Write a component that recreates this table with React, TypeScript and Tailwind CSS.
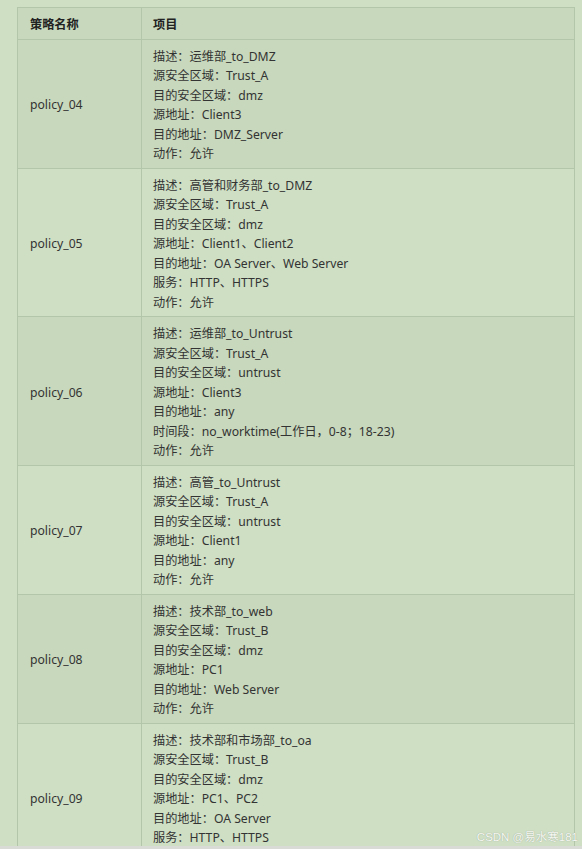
const rows = [
  {
    name: "policy_04",
    items: [
      "描述：运维部_to_DMZ",
      "源安全区域：Trust_A",
      "目的安全区域：dmz",
      "源地址：Client3",
      "目的地址：DMZ_Server",
      "动作：允许",
    ],
  },
  {
    name: "policy_05",
    items: [
      "描述：高管和财务部_to_DMZ",
      "源安全区域：Trust_A",
      "目的安全区域：dmz",
      "源地址：Client1、Client2",
      "目的地址：OA Server、Web Server",
      "服务：HTTP、HTTPS",
      "动作：允许",
    ],
  },
  {
    name: "policy_06",
    items: [
      "描述：运维部_to_Untrust",
      "源安全区域：Trust_A",
      "目的安全区域：untrust",
      "源地址：Client3",
      "目的地址：any",
      "时间段：no_worktime(工作日，0-8；18-23)",
      "动作：允许",
    ],
  },
  {
    name: "policy_07",
    items: [
      "描述：高管_to_Untrust",
      "源安全区域：Trust_A",
      "目的安全区域：untrust",
      "源地址：Client1",
      "目的地址：any",
      "动作：允许",
    ],
  },
  {
    name: "policy_08",
    items: [
      "描述：技术部_to_web",
      "源安全区域：Trust_B",
      "目的安全区域：dmz",
      "源地址：PC1",
      "目的地址：Web Server",
      "动作：允许",
    ],
  },
  {
    name: "policy_09",
    items: [
      "描述：技术部和市场部_to_oa",
      "源安全区域：Trust_B",
      "目的安全区域：dmz",
      "源地址：PC1、PC2",
      "目的地址：OA Server",
      "服务：HTTP、HTTPS",
      "动作：允许",
    ],
  },
];

export default function App() {
  return (
    <main
      className="relative h-[849px] overflow-hidden bg-[#cedfc4] text-[12.2px] leading-[19.5px] text-[#333]"
      style={{ fontFamily: '"Noto Sans", "Noto Sans CJK SC", sans-serif' }}
    >
      <div className="pt-[7px] pl-[17px] pr-[7px]">
        <table className="w-full border-collapse">
          <thead>
            <tr className="bg-[#c7d8bc]">
              <th className="w-[124px] border border-[#b4c6a9] px-[12px] pt-[7px] pb-[4px] text-left font-bold text-[#222]">
                策略名称
              </th>
              <th className="border border-[#b4c6a9] px-[11px] pt-[7px] pb-[4px] text-left font-bold text-[#222]">
                项目
              </th>
            </tr>
          </thead>
          <tbody>
            {rows.map((r, i) => (
              <tr key={r.name} className={i % 2 === 0 ? "bg-[#c7d8bc]" : "bg-[#cedfc4]"}>
                <td className="border border-[#b4c6a9] px-[12px] pt-[7px] pb-[4px] align-middle">{r.name}</td>
                <td className="border border-[#b4c6a9] px-[11px] pt-[7px] pb-[4px]">
                  {r.items.map((t, j) => (
                    <div key={j}>{t}</div>
                  ))}
                </td>
              </tr>
            ))}
          </tbody>
        </table>
      </div>
      <div
        className="absolute bottom-[5px] right-[4px] text-[11.5px] leading-[14px] text-[#f6f8f3] [text-shadow:0_0_1px_#8e9c88]"
        style={{ fontFamily: '"Liberation Sans", "Noto Sans CJK SC", sans-serif' }}
      >
        CSDN @易水寒181
      </div>
      <div className="absolute bottom-0 left-0 right-0 h-[3px] bg-[#d9dcd6]" />
    </main>
  );
}
